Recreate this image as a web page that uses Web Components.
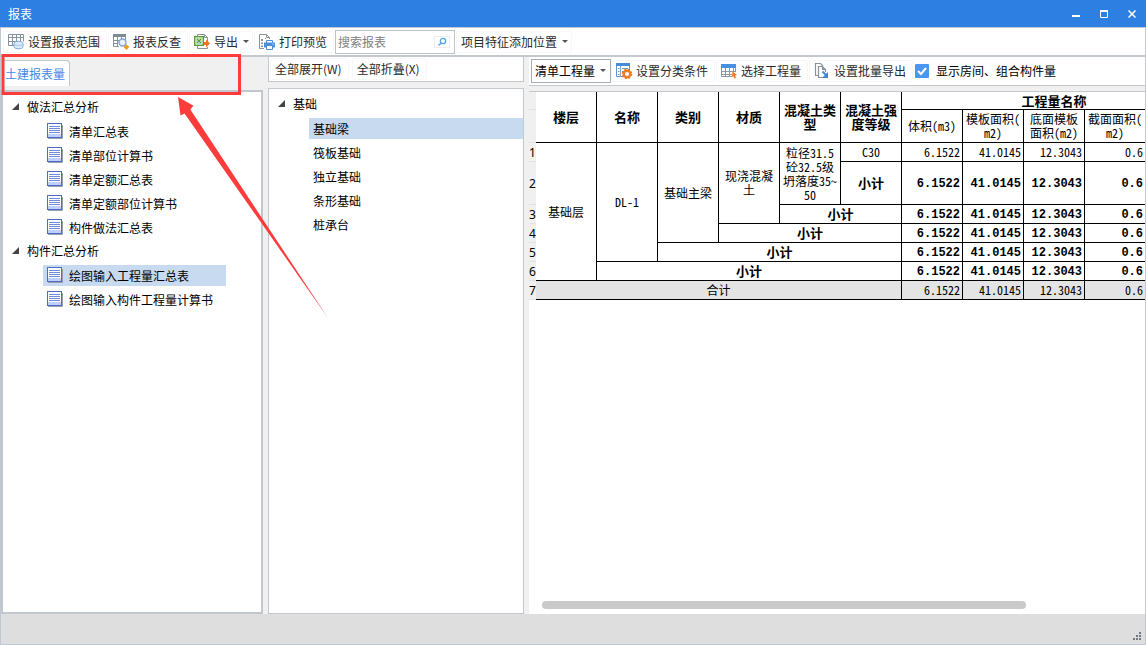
<!DOCTYPE html>
<html lang="zh-CN">
<head>
<meta charset="utf-8">
<title>报表</title>
<style>
  html, body { margin: 0; height: 100%; }
  body {
    font: 12px/16px "Noto Sans CJK SC", "Liberation Sans", sans-serif;
    color: #1a1a1a;
    --line: #c3c8ce;
    --accent: #2d7fe1;
    --select: #c8daf0;
    --face: #f0f0f0;
  }
</style>
</head>
<body>
<report-window></report-window>

<script>
function define(name, html, setup) {
  const tpl = document.createElement('template');
  tpl.innerHTML = html;
  customElements.define(name, class extends HTMLElement {
    constructor() {
      super();
      this.attachShadow({ mode: 'open' }).append(tpl.content.cloneNode(true));
    }
    connectedCallback() { if (setup) setup(this, this.shadowRoot); }
  });
}

/* ---- icons ---- */
const page = (a, b, c, d) => `
  <path d="M1 15.500h14.500V2" fill="none" stroke="#9a9fa8"/>
  <rect x=".5" y=".5" width="14" height="14" fill="${a}" stroke="${b}"/>
  <rect x="1" y="11" width="13" height="3" fill="${c}"/>
  <path d="M2 3.500h11M2 5.500h11M2 7.500h11M2 9.500h11" stroke="${d}"/>`;
const icons = {
  range: `<path d="M.5 .5h15v7M.5 .5v11H7M0 3.500h15M0 7.500h9M4.500 0v11M8.500 0v8M12.500 0v7" fill="none" stroke="#88929c"/>
    <path d="M6 9.500c0-3 9-3 9 0v3c0 3-9 3-9 0z" fill="#d9eafb" stroke="#76a5d8"/><path d="M6 10c1 2 8 2 9 0" fill="none" stroke="#a9c9ec"/>`,
  lookup: `<path d="M0 0h13v3H0z" fill="#7f8993"/><path d="M.5 0v12.500H6M4.500 2v10M8.500 2v3M12.500 2v4M0 6.500h6M0 9.500h5" fill="none" stroke="#88929c"/>
    <circle cx="9.500" cy="8.500" r="3.500" fill="#e9f1fc" stroke="#7fa4d8" stroke-width="1.400"/>
    <path d="M13.500 10.200l2.900 2.900-2.900 2.900-2.900-2.900z" fill="#f29a1c"/>`,
  export: `<path d="M3.500 2V.5h7l3 3V8M13.500 13v1.500h-10V12M10.500 .5v3h3" fill="none" stroke="#8a939c"/>
    <rect x=".7" y="2.700" width="8.600" height="8.600" fill="#f4faef" stroke="#5a9e3c" stroke-width="1.400"/>
    <path d="M3 5l4 4M7 5l-4 4" stroke="#5a9e3c" stroke-width="1.300"/><path d="M2.500 4.500h5v5h-5z" fill="none" stroke="#9cc884" stroke-width=".6"/>
    <path d="M10 8h2V5.500l4 4-4 4V11h-2z" fill="#f07522"/>`,
  print: `<path d="M5 14.500H.5V.5h7l3 3V5M7.500 .5v3h3" fill="none" stroke="#8a939c"/>
    <path d="M2 5h2v2H2zM2 8.500h2v1.500H2zM2 11.500h2V13H2zM6 4h1v1H6z" fill="#8a939c"/>
    <path d="M7.500 9V6.500h6V9" fill="#fff" stroke="#4a90d9"/><path d="M5 8.500h11v5H5z" fill="#4a90d9"/>
    <path d="M7.500 11.500h6v4h-6z" fill="#fff" stroke="#4a90d9"/><path d="M13.500 9.500h1v1h-1z" fill="#fff"/>`,
  classify: `<path d="M.5 .5h13v13H.5z" fill="#fff" stroke="#5a93cf"/><path d="M0 0h14v3H0z" fill="#4b8ad0"/>
    <path d="M4.500 3v11" stroke="#8aa2bb"/><path d="M2 5.500h1.500M2 8.500h1.500M2 11.500h1.500M6 5.500h6M6 8.500h2" stroke="#7590ab"/>
    <circle cx="11" cy="11" r="3.300" fill="#fff" stroke="#ee7c28" stroke-width="2.400"/>
    <circle cx="11" cy="11" r="4.700" fill="none" stroke="#ee7c28" stroke-width="1.300" stroke-dasharray="1.900 1.800"/>`,
  choose: `<path d="M0 1h15v4H0z" fill="#4a90e2"/><path d="M.5 5v8.500H11M4.500 5v9M8.500 5v9M12.500 5v3M14.500 5v4M0 8.500h14M0 11.500h11" fill="none" stroke="#8a97a5"/>
    <path d="M11.500 8.500l4.500 3.500-2 .5 1 2.500-1.500 .5-1-2.300-1.500 1z" fill="#f07522"/>`,
  batch: `<path d="M4 12.500H1.500V.5h5L9 3" fill="none" stroke="#8a939c" stroke-width="1.200"/>
    <path d="M9 14.500H4.500V3.500h4l3 3V9M8.500 3.500v3h3" fill="none" stroke="#8a939c" stroke-width="1.200"/>
    <path d="M8.500 8.500l3.500 3.500" stroke="#3f87cf" stroke-width="1.800"/><path d="M14 9v6H8z" fill="#3f87cf"/>`,
  sheet: page('#fdfdff', '#4f6cc0', '#bcd0fa', '#6f8cd8'),
  sheeton: page('#a5ceff', '#2f5cae', '#5c9cec', '#3d7ad0'),
  down: `<path d="M0 6h6L3 9z" fill="#555"/>`,
  open: `<path d="M7 4v7H0z" fill="#444"/>`,
  search: `<circle cx="9" cy="7" r="2.700" fill="none" stroke="#57a3e6" stroke-width="1.300"/><path d="M7.200 9L4.500 11.500" stroke="#57a3e6" stroke-width="1.500"/>`
};
define('rs-icon', `
<style>:host{display:block;flex:none;width:16px;height:16px} :host([narrow]){width:7px} svg{display:block;overflow:visible}</style>
<svg width="16" height="16" aria-hidden="true"></svg>`,
(el, root) => { root.querySelector('svg').innerHTML = icons[el.getAttribute('name')]; });

/* ---- toolbar button ---- */
define('tool-button', `
<style>
  :host{display:block;flex:none}
  button{display:flex;align-items:center;gap:4px;height:22px;padding:0 6px 0 4px;border:1px solid #f7f7f7;border-radius:3px;
    background:#fff;font:inherit;color:#2a2a2a;white-space:nowrap}
  :host([menu]) button{gap:5px;padding-right:2px}
  :host([menu]) ::slotted([slot=icon]){margin-right:-1px}
</style>
<button type="button"><slot name="icon"></slot><slot></slot><slot name="more"></slot></button>`);

/* ---- title bar ---- */
define('title-bar', `
<style>
  :host{display:flex;align-items:center;height:27px;padding-left:8px;background:var(--accent);color:#fff}
  h1{flex:1;margin:0;font:inherit}
  button{width:28px;height:27px;padding:0;border:0;background:none;color:inherit;display:grid;place-items:center}
</style>
<h1><slot></slot></h1>
<button type="button" aria-label="最小化"><svg width="8" height="8"><path d="M0 6h8" stroke="#fff" stroke-width="2"/></svg></button>
<button type="button" aria-label="最大化"><svg width="8" height="8"><path d="M.5 1v6.500h7V1" fill="none" stroke="#fff"/><path d="M0 1h8" stroke="#fff" stroke-width="2"/></svg></button>
<button type="button" aria-label="关闭"><svg width="8" height="8"><path d="M.5 .5l7 7M7.500 .5l-7 7" stroke="#fff" stroke-width="1.500"/></svg></button>`);

/* ---- search box ---- */
define('search-box', `
<style>
  :host{display:flex;align-items:center;box-sizing:border-box;width:120px;height:24px;border:1px solid #c0c4c9;background:#fff}
  input{flex:1;min-width:0;border:0;padding:0 0 0 2px;font:inherit;outline:0;background:none}
  input::placeholder{color:#808080;opacity:1}
  button{width:16px;height:12px;margin-right:4px;padding:0;border:1px solid #ececec;background:#fff;display:flex;align-items:center;justify-content:center}
</style>
<input type="search" placeholder="搜索报表" aria-label="搜索报表">
<button type="button" aria-label="搜索"><rs-icon name="search"></rs-icon></button>`);

/* ---- trees ---- */
define('tree-group', `
<style>
  :host{display:block}
  .head{display:flex;align-items:center;gap:8px;height:24px;padding-left:9px;color:#000}
  .items{display:flex;flex-direction:column}
</style>
<div class="head"><rs-icon name="open" narrow></rs-icon><span></span></div>
<div class="items" role="group"><slot></slot></div>`,
(el, root) => { root.querySelector('span').textContent = el.getAttribute('label'); });

define('tree-item', `
<style>
  :host{display:flex;align-items:center;height:21px;margin:2px 0 1px 40px;color:#000}
  :host([selected]){background:var(--select)}
  :host([wide]){padding-left:4px}
  :host([hug]){width:fit-content;padding-right:37px}
  rs-icon{margin:0 6px 1px 4px}
  :host([wide]) rs-icon{display:none}
</style>
<rs-icon name="sheet"></rs-icon><slot></slot>`,
(el, root) => {
  el.setAttribute('role', 'treeitem');
  if (el.hasAttribute('selected')) root.querySelector('rs-icon').setAttribute('name', 'sheeton');
});

/* ---- left column ---- */
define('report-nav', `
<style>
  :host{display:flex;flex-direction:column;background:var(--face)}
  .tabs{display:flex;padding:3px 0 4px 1px}
  .tabs button{height:26px;padding:0 4px 0 3px;border:solid var(--line);border-width:1px 1px 0 0;border-radius:0 4px 0 0;
    background:#fff;color:#3f8ae8;font:inherit;white-space:nowrap}
  .tree{flex:1;padding-top:3px;border:2px solid var(--line);background:#fff}
</style>
<div class="tabs" role="tablist"><button type="button" role="tab" aria-selected="true">土建报表量</button></div>
<div class="tree" role="tree">
  <tree-group label="做法汇总分析">
    <tree-item>清单汇总表</tree-item>
    <tree-item>清单部位计算书</tree-item>
    <tree-item>清单定额汇总表</tree-item>
    <tree-item>清单定额部位计算书</tree-item>
    <tree-item>构件做法汇总表</tree-item>
  </tree-group>
  <tree-group label="构件汇总分析">
    <tree-item selected hug>绘图输入工程量汇总表</tree-item>
    <tree-item>绘图输入构件工程量计算书</tree-item>
  </tree-group>
</div>`);

/* ---- middle column ---- */
define('member-nav', `
<style>
  :host{display:flex;flex-direction:column;gap:6px}
  .bar{display:flex;align-items:center;gap:3px;height:24px;padding-left:1px;border:solid var(--line);border-width:0 1px 1px;background:#fff}
  .tree{flex:1;padding-top:3px;border:1px solid var(--line);background:#fff}
</style>
<div class="bar"><tool-button>全部展开(W)</tool-button><tool-button>全部折叠(X)</tool-button></div>
<div class="tree" role="tree">
  <tree-group label="基础">
    <tree-item wide selected>基础梁</tree-item>
    <tree-item wide>筏板基础</tree-item>
    <tree-item wide>独立基础</tree-item>
    <tree-item wide>条形基础</tree-item>
    <tree-item wide>桩承台</tree-item>
  </tree-group>
</div>`);

/* ---- quantity table ---- */
define('quantity-table', `
<style>
  :host{display:block;overflow:hidden}
  table{table-layout:fixed;width:678px;border-collapse:separate;border-spacing:0;
    font:12px/14px "Noto Sans Mono CJK SC","Noto Sans CJK SC",monospace;color:#000;text-align:center}
  .no{width:7px} .c{width:61px}
  th,td{padding:0 2px;border:solid #000;border-width:0 1px 1px 0;vertical-align:middle;line-break:anywhere}
  th,.b{font-weight:bold;font-size:13px}
  th.u{font-weight:normal;font-size:12px}
  .i{padding:1px 0 0;border:0;border-bottom:1px solid #e2e2e2;background:var(--face);font:12px/14px "Noto Sans",sans-serif}
  .n{text-align:right}
  .n.b{padding-top:2px;font:bold 12px/14px "Liberation Mono",monospace}
  tr{height:19px} .h1{height:18px} .h2{height:33px} .tall{height:43px}
  .sum td:not(.i){background:#e4e4e4}
</style>
<table>
  <colgroup><col class="no"><col class="c"><col class="c"><col class="c"><col class="c"><col class="c"><col class="c"><col class="c"><col class="c"><col class="c"><col class="c"><col class="c"></colgroup>
  <thead>
    <tr class="h1"><td class="i"></td><th rowspan="2">楼层</th><th rowspan="2">名称</th><th rowspan="2">类别</th><th rowspan="2">材质</th><th rowspan="2">混凝土类型</th><th rowspan="2">混凝土强度等级</th><th colspan="5">工程量名称</th></tr>
    <tr class="h2"><td class="i"></td><th class="u">体积(m3)</th><th class="u">模板面积(m2)</th><th class="u">底面模板面积(m2)</th><th class="u">截面面积(m2)</th><th></th></tr>
  </thead>
  <tbody>
    <tr><td class="i">1</td><td rowspan="6">基础层</td><td rowspan="5">DL-1</td><td rowspan="4">基础主梁</td><td rowspan="3">现浇混凝土</td><td rowspan="2">粒径31.5砼32.5级坍落度35~50</td><td>C30</td><td class="n">6.1522</td><td class="n">41.0145</td><td class="n">12.3043</td><td class="n">0.6</td><td></td></tr>
    <tr class="tall"><td class="i">2</td><td class="b">小计</td><td class="n b">6.1522</td><td class="n b">41.0145</td><td class="n b">12.3043</td><td class="n b">0.6</td><td></td></tr>
    <tr><td class="i">3</td><td class="b" colspan="2">小计</td><td class="n b">6.1522</td><td class="n b">41.0145</td><td class="n b">12.3043</td><td class="n b">0.6</td><td></td></tr>
    <tr><td class="i">4</td><td class="b" colspan="3">小计</td><td class="n b">6.1522</td><td class="n b">41.0145</td><td class="n b">12.3043</td><td class="n b">0.6</td><td></td></tr>
    <tr><td class="i">5</td><td class="b" colspan="4">小计</td><td class="n b">6.1522</td><td class="n b">41.0145</td><td class="n b">12.3043</td><td class="n b">0.6</td><td></td></tr>
    <tr><td class="i">6</td><td class="b" colspan="5">小计</td><td class="n b">6.1522</td><td class="n b">41.0145</td><td class="n b">12.3043</td><td class="n b">0.6</td><td></td></tr>
    <tr class="sum"><td class="i">7</td><td colspan="6">合计</td><td class="n">6.1522</td><td class="n">41.0145</td><td class="n">12.3043</td><td class="n">0.6</td><td></td></tr>
  </tbody>
</table>`);

/* ---- right column ---- */
define('report-view', `
<style>
  :host{display:flex;flex-direction:column;gap:5px;min-width:0}
  .bar{display:flex;align-items:center;gap:1px;height:28px;padding-left:2px;border-bottom:1px solid var(--line);background:#fff}
  .combo{position:relative;flex:none;width:79px}
  .combo rs-icon{position:absolute;right:3px;top:4px;pointer-events:none}
  select{display:block;appearance:none;width:80px;height:24px;padding:0 0 0 3px;border:1px solid #a9adb2;border-radius:0;background:#fff;color:#000;font:inherit}
  label{display:flex;align-items:center;gap:7px;margin-left:1px;color:#000;white-space:nowrap}
  .tick{position:relative;display:block;width:14px;height:14px}
  input{appearance:none;display:block;width:14px;height:14px;margin:0;border-radius:1px;background:#4a97f2}
  .tick svg{position:absolute;inset:0;pointer-events:none}
  .sheet{flex:1;display:flex;flex-direction:column;justify-content:space-between;border-top:1px solid var(--line);background:#fff}
  .thumb{width:78.6%;height:8px;margin:0 0 5px 13px;border-radius:4px;background:#cacaca}
</style>
<div class="bar">
  <div class="combo"><select aria-label="工程量类型"><option>清单工程量</option></select><rs-icon name="down" narrow></rs-icon></div>
  <tool-button><rs-icon slot="icon" name="classify"></rs-icon>设置分类条件</tool-button>
  <tool-button><rs-icon slot="icon" name="choose"></rs-icon>选择工程量</tool-button>
  <tool-button><rs-icon slot="icon" name="batch"></rs-icon>设置批量导出</tool-button>
  <label><span class="tick"><input type="checkbox" checked><svg width="14" height="14"><path d="M3 7l3 3 5-6" fill="none" stroke="#fff" stroke-width="2"/></svg></span>显示房间、组合构件量</label>
</div>
<div class="sheet"><quantity-table></quantity-table><div class="thumb"></div></div>`);

/* ---- annotation drawn over the window ---- */
define('callout-mark', `
<style>:host{position:absolute;left:0;top:0;pointer-events:none} svg{display:block}</style>
<svg width="340" height="330" aria-hidden="true">
  <rect x="3" y="55.500" width="236.500" height="38" fill="none" stroke="#fc3b3b" stroke-width="3"/>
  <path d="M178 97l15.500 8.700-3.200 3.800L328 318 184.500 113.500l-4 2z" fill="#fc3b3b"/>
</svg>`);

/* ---- window ---- */
define('report-window', `
<style>
  :host{position:relative;display:flex;flex-direction:column;min-height:100vh;background:var(--face)}
  .body{flex:1;display:flex;flex-direction:column;border:solid #c0c8d6;border-width:0 1px 1px}
  .tools{display:flex;align-items:center;gap:1px;height:27px;padding-left:2px;border:solid var(--line);border-width:1px 0 2px;background:#fff}
  main{flex:1;display:grid;grid-template-columns:262px 256px minmax(0,1fr);gap:5px}
  footer{display:flex;align-items:flex-end;justify-content:flex-end;height:30px;background:#dededf}
  footer svg{margin:0 3px 3px 0}
</style>
<title-bar>报表</title-bar>
<div class="body">
  <div class="tools" role="toolbar">
    <tool-button><rs-icon slot="icon" name="range"></rs-icon>设置报表范围</tool-button>
    <tool-button><rs-icon slot="icon" name="lookup"></rs-icon>报表反查</tool-button>
    <tool-button menu><rs-icon slot="icon" name="export"></rs-icon>导出<rs-icon slot="more" name="down" narrow></rs-icon></tool-button>
    <tool-button><rs-icon slot="icon" name="print"></rs-icon>打印预览</tool-button>
    <search-box></search-box>
    <tool-button menu>项目特征添加位置<rs-icon slot="more" name="down" narrow></rs-icon></tool-button>
  </div>
  <main><report-nav></report-nav><member-nav></member-nav><report-view></report-view></main>
  <footer><svg width="9" height="9" aria-hidden="true"><path d="M6 0h2v2H6zM3 3h2v2H3zM6 3h2v2H6zM0 6h2v2H0zM3 6h2v2H3zM6 6h2v2H6z" fill="#727a84"/></svg></footer>
</div>
<callout-mark></callout-mark>`);
</script>
</body>
</html>
